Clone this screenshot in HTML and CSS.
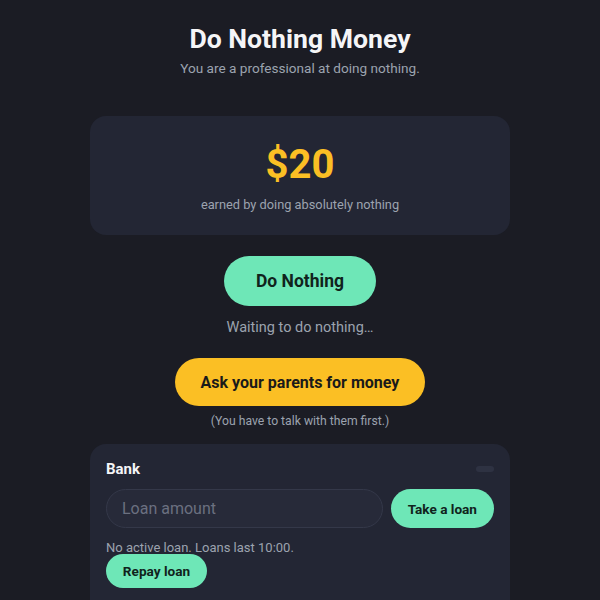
FILE: index.html
```html
<!DOCTYPE html>
<html>
<head>
<meta charset="utf-8">
<link rel="stylesheet" href="styles.css">
</head>
<body>
<main class="app">
  <header class="head">
    <h1 class="title">Do Nothing Money</h1>
    <p class="sub">You are a professional at doing nothing.</p>
  </header>
  <section class="card money">
    <div class="amount">$20</div>
    <div class="earned">earned by doing absolutely nothing</div>
  </section>
  <div class="actions">
    <button class="btn green big">Do Nothing</button>
    <p class="status">Waiting to do nothing…</p>
    <button class="btn yellow ask">Ask your parents for money</button>
    <p class="hint">(You have to talk with them first.)</p>
  </div>
  <section class="card bank">
    <div class="bank-head">
      <h2 class="bank-title">Bank</h2>
      <span class="pill"></span>
    </div>
    <div class="loan-row">
      <input class="loan-input" placeholder="Loan amount">
      <button class="btn green small">Take a loan</button>
    </div>
    <p class="loan-status">No active loan. Loans last 10:00.</p>
    <button class="btn green small repay">Repay loan</button>
  </section>
</main>
</body>
</html>
```

FILE: styles.css
```css
* { box-sizing: border-box; }
html, body { margin: 0; padding: 0; }
body {
  background: #1b1c24;
  font-family: Roboto, "Noto Sans", sans-serif;
  color: #f3f4f6;
}
.app {
  width: 420px;
  margin: 0 auto;
  padding-top: 23px;
  display: flex;
  flex-direction: column;
  align-items: center;
}
.head { text-align: center; }
.title {
  margin: 0;
  font-size: 26.6px;
  line-height: 32px;
  font-weight: 700;
  color: #f5f5f7;
}
.sub {
  margin: 4px 0 0;
  font-size: 13.6px;
  line-height: 18px;
  color: #9ca3af;
}
.card {
  width: 420px;
  background: #232634;
  border-radius: 16px;
}
.money {
  margin-top: 39px;
  height: 119px;
  display: flex;
  flex-direction: column;
  align-items: center;
  padding-top: 26px;
}
.amount {
  font-size: 40px;
  line-height: 46px;
  font-weight: 700;
  color: #fbbf24;
}
.earned {
  margin-top: 9px;
  font-size: 12.8px;
  line-height: 16px;
  color: #9ca3af;
}
.actions {
  display: flex;
  flex-direction: column;
  align-items: center;
}
.btn {
  border: 0;
  border-radius: 999px;
  font-family: Roboto, "Noto Sans", sans-serif;
  font-weight: 700;
  color: #10231c;
  cursor: pointer;
}
.green { background: #6ee7b7; }
.yellow { background: #fbbf24; color: #1a1a1a; }
.big {
  margin-top: 21px;
  width: 152px;
  height: 50px;
  font-size: 17.5px;
}
.status {
  margin: 13px 0 0;
  font-size: 14.5px;
  line-height: 18px;
  color: #9ca3af;
}
.ask {
  margin-top: 21px;
  width: 250px;
  height: 48px;
  font-size: 16px;
}
.hint {
  margin: 7px 0 0;
  font-size: 12.2px;
  line-height: 16px;
  color: #9ca3af;
}
.bank {
  margin-top: 15px;
  padding: 16px;
  height: 180px;
}
.bank-head {
  display: flex;
  justify-content: space-between;
  align-items: center;
}
.bank-title {
  margin: 0;
  font-size: 15px;
  line-height: 18px;
  font-weight: 700;
  color: #f5f5f7;
}
.pill {
  width: 18px;
  height: 6px;
  border-radius: 3px;
  background: #2e3242;
}
.loan-row {
  margin-top: 11px;
  display: flex;
  gap: 8px;
}
.loan-input {
  flex: 1;
  min-width: 0;
  height: 39px;
  border-radius: 999px;
  border: 1px solid #343849;
  background: #272a39;
  padding: 0 15px;
  font-family: Roboto, "Noto Sans", sans-serif;
  font-size: 16px;
  color: #e5e7eb;
  outline: none;
}
.loan-input::placeholder { color: #6b7080; }
.small {
  height: 39px;
  padding: 0 17px;
  font-size: 13.6px;
}
.loan-status {
  margin: 12px 0 0;
  font-size: 13px;
  line-height: 16px;
  color: #9ca3af;
}
.repay {
  margin-top: -2px;
  height: 34px;
  width: 101px;
  padding: 0;
}
```
